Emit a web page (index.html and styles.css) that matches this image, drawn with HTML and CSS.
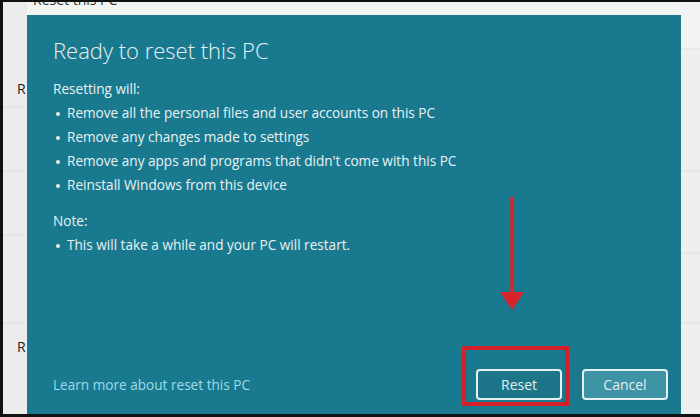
FILE: index.html
```html
<!DOCTYPE html>
<html lang="en">

<head>
    <meta charset="UTF-8">
    <meta name="viewport" content="width=device-width, initial-scale=1.0">
    <title>Reset this PC</title>
    <link rel="stylesheet" href="styles.css">
</head>

<body>
    <div class="screen">
        <div class="side side-left">
            <span class="ghost ghost-1">R</span>
            <span class="ghost ghost-2">R</span>
        </div>

        <div class="center">
            <div class="topbar"><span>Reset this PC</span></div>

            <div class="dialog">
                <h1>Ready to reset this PC</h1>

                <p class="label">Resetting will:</p>
                <ul class="list">
                    <li>Remove all the personal files and user accounts on this PC</li>
                    <li>Remove any changes made to settings</li>
                    <li>Remove any apps and programs that didn't come with this PC</li>
                    <li>Reinstall Windows from this device</li>
                </ul>

                <p class="label note">Note:</p>
                <ul class="list">
                    <li>This will take a while and your PC will restart.</li>
                </ul>

                <div class="footer">
                    <a class="link" href="#">Learn more about reset this PC</a>
                    <div class="buttons">
                        <button class="btn btn-reset">Reset</button>
                        <button class="btn btn-cancel">Cancel</button>
                    </div>
                </div>
            </div>
        </div>

        <div class="side side-right"></div>

        <!-- annotation -->
        <svg class="arrow" width="30" height="120" viewBox="0 0 30 120">
            <line x1="15" y1="2" x2="15" y2="104" stroke="#d8232c" stroke-width="3.5" />
            <polygon points="3,97 27,97 15,115" fill="#d8232c" />
        </svg>
        <div class="highlight"></div>
    </div>
</body>

</html>
```

FILE: styles.css
```css
* {
    box-sizing: border-box;
}

body {
    margin: 0;
    background: #000;
    font-family: "Open Sans", "Noto Sans", sans-serif;
}

.screen {
    position: relative;
    width: 700px;
    height: 417px;
    display: flex;
    border-top: 2px solid #111;
    border-left: 3px solid #111;
    border-bottom: 3px solid #111;
    background: #ececec;
    overflow: hidden;
}

.side {
    position: relative;
    background: linear-gradient(to bottom, #ececec 0, #ececec 104px, #dcdcdc 105px, #ececec 106px, #ececec 168px, #dcdcdc 169px, #ececec 170px, #ececec 232px, #dcdcdc 233px, #ececec 234px, #ececec 320px, #dcdcdc 321px, #ececec 322px);
}

.side-left {
    width: 24px;
}

.side-right {
    width: 19px;
    background: linear-gradient(to bottom, #f2f2f2 0, #f2f2f2 46px, #e2e2e2 47px, #efefef 48px, #efefef 168px, #dedede 169px, #efefef 170px, #efefef 250px, #dedede 251px, #efefef 252px, #efefef 320px, #dedede 321px, #efefef 322px);
}

.ghost {
    position: absolute;
    left: 14px;
    font-size: 14px;
    color: #222;
}

.ghost-1 {
    top: 77px;
}

.ghost-2 {
    top: 335px;
}

.center {
    width: 654px;
    display: flex;
    flex-direction: column;
}

.topbar {
    height: 13px;
    background: #f1f6f3;
    overflow: hidden;
    position: relative;
}

.topbar span {
    position: absolute;
    left: 6px;
    top: -12px;
    font-size: 14px;
    color: #333;
}

.dialog {
    flex: 1;
    background: #197a8f;
    color: #e9f1f3;
    padding: 20px 0 0 26px;
    display: flex;
    flex-direction: column;
}

h1 {
    margin: 0;
    font-size: 22px;
    font-weight: 300;
    line-height: 30px;
}

.label {
    margin: 12px 0 0;
    font-size: 13.6px;
    line-height: 24px;
}

.note {
    margin-top: 12px;
}

.list {
    margin: 0;
    padding: 0;
    list-style: none;
}

.list li {
    font-size: 13.6px;
    line-height: 24px;
    padding-left: 14px;
    position: relative;
}

.list li::before {
    content: "";
    position: absolute;
    left: 3px;
    top: 11px;
    width: 4px;
    height: 4px;
    border-radius: 50%;
    background: #e9f1f3;
}

.footer {
    margin-top: auto;
    display: flex;
    align-items: center;
    justify-content: space-between;
    padding: 0 13px 14px 0;
}

.link {
    color: #9fdbe8;
    text-decoration: none;
    font-size: 13.6px;
}

.buttons {
    display: flex;
    gap: 20px;
}

.btn {
    width: 86px;
    height: 31px;
    border: 2px solid #e6f0f2;
    border-radius: 4px;
    font-family: inherit;
    font-size: 14px;
    color: #e4eef0;
}

.btn-reset {
    background: #1c7588;
}

.btn-cancel {
    background: #3e93a4;
}

.arrow {
    position: absolute;
    left: 494px;
    top: 193px;
}

.highlight {
    position: absolute;
    left: 459px;
    top: 344px;
    width: 107px;
    height: 60px;
    border: 4px solid #d4202a;
}
```
